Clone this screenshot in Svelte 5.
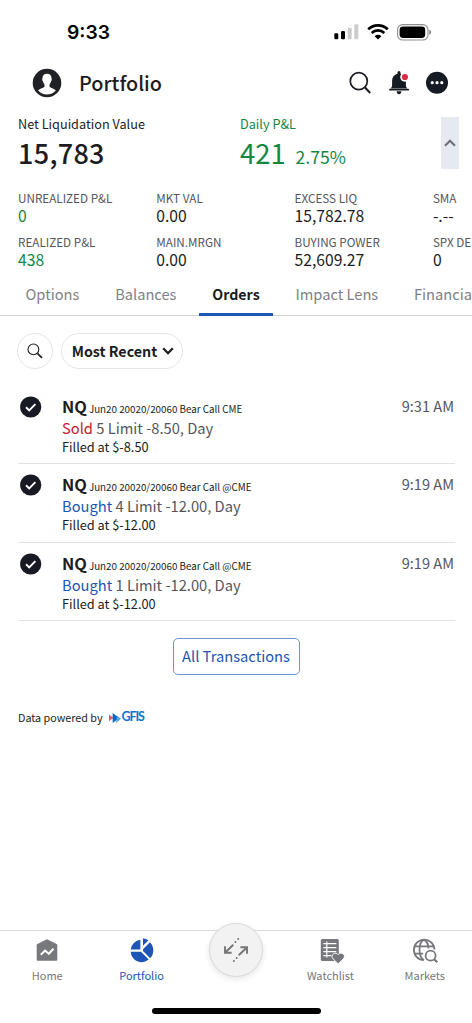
<script>
    let activeTab = "Orders";
    let activeNav = "Portfolio";

    const tabs = ["Options", "Balances", "Orders", "Impact Lens", "Financia"];

    const stats = [
        { label: "UNREALIZED P&L", value: "0", up: true },
        { label: "MKT VAL", value: "0.00" },
        { label: "EXCESS LIQ", value: "15,782.78" },
        { label: "SMA", value: "-.--" },
        { label: "REALIZED P&L", value: "438", up: true },
        { label: "MAIN.MRGN", value: "0.00" },
        { label: "BUYING POWER", value: "52,609.27" },
        { label: "SPX DE", value: "0" }
    ];

    const orders = [
        { name: "Jun20 20020/20060 Bear Call CME", side: "Sold", detail: "5 Limit -8.50, Day", fill: "$-8.50", time: "9:31 AM" },
        { name: "Jun20 20020/20060 Bear Call @CME", side: "Bought", detail: "4 Limit -12.00, Day", fill: "$-12.00", time: "9:19 AM" },
        { name: "Jun20 20020/20060 Bear Call @CME", side: "Bought", detail: "1 Limit -12.00, Day", fill: "$-12.00", time: "9:19 AM" }
    ];
</script>

<div class="screen">
    <div class="status">
        <span class="clock">9:33</span>
        <div class="status-icons">
            <svg width="25" height="16" viewBox="0 0 25 16">
                <rect x="0.3" y="9.3" width="4" height="6" rx="1.2" />
                <rect x="7" y="7" width="4" height="8.3" rx="1.2" />
                <rect x="13.7" y="3.7" width="4" height="11.6" rx="1.2" fill="#ccc" />
                <rect x="20.3" y="0.3" width="4" height="15" rx="1.2" fill="#ccc" />
            </svg>
            <svg width="22" height="16" viewBox="0 0 22 16">
                <path d="M1.2 5.2A14.2 14.2 0 0 1 20.8 5.2M4.7 8.9A9.2 9.2 0 0 1 17.3 8.9" fill="none" stroke="#000" stroke-width="2.7" />
                <path d="M7.6 12.2a5.4 5.4 0 0 1 6.8 0L11 15.6z" />
            </svg>
            <svg width="35" height="17" viewBox="0 0 35 17">
                <rect x="0.6" y="0.6" width="30.4" height="15.4" rx="5" fill="none" stroke="#8e8e8e" stroke-width="1.1" />
                <rect x="2.6" y="2.6" width="25.6" height="11.4" rx="3.4" />
                <path d="M32.2 5.8c2.6.8 2.6 4.2 0 5z" fill="#888" />
            </svg>
        </div>
    </div>

    <header>
        <svg width="30" height="30" viewBox="0 0 30 30">
            <circle cx="15" cy="15" r="14.3" fill="#212226" />
            <path d="M15 5.8c-3 0-4.7 2-4.6 4.9-.5.5-.1 2.2.5 2.6.3 1.4.9 2.4 1.6 3.1v2.1c-.8 1.7-4.7 1.9-6.3 4A11.5 11.5 0 0 0 15 26.6a11.5 11.5 0 0 0 8.8-4.1c-1.6-2.1-5.5-2.3-6.3-4v-2.1c.7-.7 1.3-1.7 1.6-3.1.6-.4 1-2.1.5-2.6.1-2.9-1.6-4.9-4.6-4.9z" fill="#fff" />
        </svg>
        <h1>Portfolio</h1>
        <div class="actions">
            <svg width="24" height="24" viewBox="0 0 24 24" fill="none" stroke="#1b1d22" stroke-width="1.7">
                <circle cx="9.8" cy="10.2" r="8.5" />
                <path d="M15.8 16.3l5.4 5.7" stroke-width="2" />
            </svg>
            <svg width="22" height="24" viewBox="0 0 22 24" fill="#161a22">
                <path d="M9.5 2.7V1.5a1.5 1.5 0 0 1 3 0v1.2c3.5.8 5.4 3.5 5.4 7v4.5c0 1.2.6 2.4 1.5 3.2H2.6c.9-.8 1.5-2 1.5-3.2V9.7c0-3.5 1.9-6.2 5.4-7z" />
                <rect x="1.2" y="17.7" width="19.8" height="1.9" rx=".7" />
                <path d="M8.6 20.2h4.8c-.1 1.8-1.1 3-2.4 3s-2.3-1.2-2.4-3z" />
                <circle cx="16.9" cy="6" r="4.7" fill="#fff" />
                <circle cx="16.9" cy="6" r="3.1" fill="#dc2b45" />
            </svg>
            <svg width="24" height="24" viewBox="0 0 24 24">
                <circle cx="12" cy="11.7" r="11" fill="#161a22" />
                <g fill="#fff">
                    <circle cx="7.2" cy="11.7" r="1.6" />
                    <circle cx="12" cy="11.7" r="1.6" />
                    <circle cx="16.8" cy="11.7" r="1.6" />
                </g>
            </svg>
        </div>
    </header>

    <section class="summary">
        <div class="net">
            <div class="caption">Net Liquidation Value</div>
            <div class="amount">15,783</div>
        </div>
        <div class="daily">
            <div class="caption">Daily P&amp;L</div>
            <div class="amount">421<small>2.75%</small></div>
        </div>
        <button class="collapse" aria-label="Collapse">
            <svg width="12" height="8" viewBox="0 0 12 8" fill="none" stroke="#6c6f78" stroke-width="2.1">
                <path d="M1 6.8l5-5 5 5" />
            </svg>
        </button>
    </section>

    <section class="stats">
        {#each stats as stat}
            <div>
                <div class="label">{stat.label}</div>
                <div class="value" class:up={stat.up}>{stat.value}</div>
            </div>
        {/each}
    </section>

    <nav class="tabs">
        {#each tabs as tab}
            <button class="tab" class:active={tab === activeTab} on:click={() => (activeTab = tab)}>{tab}</button>
        {/each}
    </nav>

    <div class="filters">
        <button class="round" aria-label="Search">
            <svg width="16" height="16" viewBox="0 0 16 16" fill="none" stroke="#1b1d22">
                <circle cx="6.4" cy="6.4" r="5.4" stroke-width="1.1" />
                <path d="M10.4 10.4l4.6 4.5" stroke-width="1.7" />
            </svg>
        </button>
        <button class="pill">
            <span>Most Recent</span>
            <svg width="12" height="8" viewBox="0 0 12 8" fill="none" stroke="#1b1d22" stroke-width="2.3">
                <path d="M1.2 1.2L6 6.2l4.8-5" />
            </svg>
        </button>
    </div>

    <div class="orders">
        {#each orders as order}
            <div class="order">
                <svg class="check" width="22" height="22" viewBox="0 0 22 22">
                    <circle cx="10.7" cy="11" r="10.6" fill="#171a23" />
                    <path d="M6 11.3l3.2 3.1 6.2-6.3" fill="none" stroke="#fff" stroke-width="1.9" />
                </svg>
                <div class="info">
                    <div class="symbol"><b>NQ</b><span>{order.name}</span></div>
                    <div class="detail"><span class={order.side === "Sold" ? "sold" : "bought"}>{order.side}</span> {order.detail}</div>
                    <div class="fill">Filled at {order.fill}</div>
                </div>
                <div class="time">{order.time}</div>
            </div>
        {/each}
    </div>

    <button class="all">All Transactions</button>

    <div class="powered">
        <span>Data powered by</span>
        <svg width="12" height="12" viewBox="0 0 12 12">
            <path d="M0 2.5l4.5 3.3L0 9.2z" fill="#e4606c" />
            <path d="M3.7 1l6.6 5-6.6 5z" fill="#0b66c3" />
            <path d="M8 3.8l4 2.9L7 11z" fill="#48a9e6" />
        </svg>
        <b>GFIS</b>
    </div>

    <footer>
        <div class="nav">
            <div class="item">
                <svg width="24" height="26" viewBox="0 0 24 26">
                    <path d="M12 2.3l9.6 4.8c.5.3.7.6.7 1.2v14.2c0 .8-.5 1.3-1.3 1.3H3c-.8 0-1.3-.5-1.3-1.3V8.3c0-.6.2-.9.7-1.2z" fill="#77787d" />
                    <path d="M5.8 17.8l4.3-4.2 3.7 3.2 4.7-5" fill="none" stroke="#fff" stroke-width="2" />
                </svg>
                <span>Home</span>
            </div>
            <div class="item" class:active={activeNav === "Portfolio"}>
                <svg width="24" height="26" viewBox="0 0 24 26" fill="#1d56b5">
                    <path d="M10.4 2.8v9.8H.7A11 11 0 0 1 10.4 2.8z" />
                    <path d="M13 1.2a11 11 0 0 1 5.4 2.1L13 8.7z" />
                    <path d="M20 5.3a11.5 11.5 0 0 1 .2 15.9L13 14v-1.8z" />
                    <path d="M.7 14.8h10.2l7.8 7.8A11 11 0 0 1 .7 14.8z" />
                </svg>
                <span>Portfolio</span>
            </div>
            <div class="item trade">
                <div class="fab">
                    <svg width="26" height="26" viewBox="0 0 26 26" fill="none" stroke="#747474" stroke-width="1.9">
                        <path d="M10.3 7.8L2.4 15.3M2 9.3v6.4h6.6" />
                        <path d="M15.7 18.2l7.9-7.5M24 16.7v-6.4h-6.6" />
                        <g fill="#747474" stroke="none">
                            <circle cx="12.4" cy="4.9" r="1" />
                            <circle cx="15.2" cy="2" r="1" />
                            <circle cx="13.6" cy="21.1" r="1" />
                            <circle cx="10.9" cy="24" r="1" />
                        </g>
                    </svg>
                </div>
            </div>
            <div class="item">
                <svg width="24" height="26" viewBox="0 0 24 26">
                    <rect x="2.8" y="2" width="18" height="22" rx="1.5" fill="#77787d" />
                    <path d="M5.3 6.6h13M5.3 10.6h13M5.3 14.6h13M5.3 18.6h8M8.8 4.5v16" stroke="#fff" stroke-width="1.2" />
                    <path d="M20.2 26.9l-5.2-5.1c-3.4-4.1 2.5-7.7 5.200-4.200 2.700-3.500 8.600.1 5.200 4.200z" fill="#77787d" stroke="#fff" stroke-width="1" />
                </svg>
                <span>Watchlist</span>
            </div>
            <div class="item">
                <svg width="26" height="26" viewBox="0 0 26 26" fill="none" stroke="#77787d" stroke-width="1.8">
                    <path d="M12 23.2A10.3 10.3 0 1 1 22.5 12.5M12 23.2c-6-3.5-6-17.5 0-20.6 2.9 1.7 4.4 5.3 4.5 9M2.6 9.3h19M2.6 16.7h8.5" />
                    <circle cx="18.6" cy="18.7" r="5" />
                    <path d="M22.2 22.3l3 3" stroke-width="2.2" />
                </svg>
                <span>Markets</span>
            </div>
        </div>
        <div class="indicator"></div>
    </footer>
</div>

<style>
    :global(body) {
        margin: 0;
        background: #fff;
    }

    .screen {
        width: 472px;
        height: 1023px;
        display: flex;
        flex-direction: column;
        overflow: hidden;
        background: #fff;
        color: #1b1d22;
        font-family: "Noto Sans CJK SC", "Noto Sans", sans-serif;
    }

    svg {
        display: block;
        flex: none;
        overflow: visible;
    }

    button {
        margin: 0;
        padding: 0;
        border: none;
        background: none;
        color: inherit;
        font-family: inherit;
    }

    .status {
        height: 62px;
        flex: none;
        box-sizing: border-box;
        padding: 2px 40px 0 67px;
        display: flex;
        align-items: center;
        justify-content: space-between;
    }

    .clock {
        font: 600 19.3px/24px Inter, sans-serif;
        color: #000;
    }

    .status-icons {
        display: flex;
        align-items: center;
        gap: 8px;
    }

    header {
        height: 42px;
        flex: none;
        display: flex;
        align-items: center;
        padding: 0 23px 0 32px;
    }

    h1 {
        flex: 1;
        margin: 0 0 0 17px;
        font-size: 19.8px;
        line-height: 30px;
        font-weight: 500;
    }

    .actions {
        display: flex;
        align-items: center;
        gap: 15px;
    }

    .summary {
        height: 84px;
        flex: none;
        box-sizing: border-box;
        display: flex;
        padding: 10px 13px 0 18px;
    }

    .net {
        width: 222px;
    }

    .daily {
        flex: 1;
        color: #13883f;
    }

    .caption {
        font-size: 12.7px;
        line-height: 19px;
    }

    .amount {
        font-size: 27px;
        line-height: 39px;
        font-weight: 500;
        letter-spacing: 0.3px;
    }

    .daily .amount {
        font-size: 27.4px;
        line-height: 38px;
        font-weight: 400;
        letter-spacing: 0;
    }

    .amount small {
        margin-left: 10px;
        font-size: 17.6px;
    }

    .collapse {
        width: 18px;
        height: 52px;
        margin-top: 3px;
        display: flex;
        align-items: center;
        justify-content: center;
        background: #e5eaf1;
    }

    .stats {
        height: 88px;
        flex: none;
        display: grid;
        grid-template-columns: repeat(4, 138.3px);
        grid-auto-rows: 44px;
        padding-left: 18px;
        white-space: nowrap;
    }

    .label {
        font-size: 11.7px;
        line-height: 19px;
        color: #55565c;
    }

    .value {
        font-size: 15.7px;
        line-height: 18px;
    }

    .up {
        color: #13883f;
    }

    .tabs {
        height: 40px;
        flex: none;
        box-sizing: border-box;
        display: flex;
        gap: 9.8px;
        padding-left: 12.5px;
        border-bottom: 1px solid #d5d6d8;
    }

    .tab {
        flex: none;
        height: 40px;
        box-sizing: border-box;
        padding: 0 13px 5px;
        font-size: 14.65px;
        line-height: 24px;
        color: #808186;
    }

    .tab.active {
        border-bottom: 3px solid #1d56b5;
        border-radius: 2px 2px 0 0;
        padding-bottom: 2px;
        color: #1b1d22;
        font-size: 14.2px;
        font-weight: 700;
    }

    .filters {
        display: flex;
        gap: 8px;
        padding: 17px 0 0 17px;
    }

    .round,
    .pill {
        height: 36px;
        box-sizing: border-box;
        display: flex;
        align-items: center;
        justify-content: center;
        border: 1px solid #e4e5e7;
        border-radius: 18px;
    }

    .round {
        width: 36px;
    }

    .pill {
        width: 122px;
        padding: 0 0 1px 2px;
        gap: 5px;
        font-size: 14.3px;
        font-weight: 700;
    }

    .orders {
        padding: 17px 17px 0 18px;
    }

    .order {
        height: 78.3px;
        box-sizing: border-box;
        display: flex;
        padding-top: 10px;
        border-bottom: 1px solid #e1e2e4;
    }

    .check {
        margin: 0 20px 0 2px;
    }

    .info {
        flex: 1;
        margin-top: -1px;
    }

    .symbol {
        display: flex;
        align-items: baseline;
        gap: 2px;
        height: 22px;
        line-height: 22px;
    }

    .symbol b {
        font-size: 16.4px;
        font-weight: 700;
    }

    .symbol span {
        font-size: 9.8px;
    }

    .detail {
        font-size: 14.7px;
        line-height: 21px;
        color: #55565c;
    }

    .sold {
        color: #c8202f;
    }

    .bought {
        color: #1d56b5;
    }

    .fill {
        font-size: 12.75px;
        line-height: 18px;
    }

    .time {
        margin: -1px 1px 0 0;
        font-size: 14.6px;
        line-height: 22px;
        color: #55565c;
    }

    .all {
        align-self: center;
        width: 127px;
        height: 37px;
        flex: none;
        margin-top: 17px;
        padding-bottom: 2px;
        border: 1px solid #6f95cd;
        border-radius: 5px;
        font-size: 14.7px;
        color: #1d56b5;
    }

    .powered {
        display: flex;
        align-items: center;
        height: 20px;
        margin: 33px 0 0 18px;
        font-size: 10.75px;
        line-height: 20px;
    }

    .powered svg {
        margin: 0 1px 0 6px;
    }

    .powered b {
        margin-top: -1px;
        font: 700 12.5px/20px Lato, sans-serif;
        letter-spacing: -1.1px;
        color: #0b74d1;
    }

    footer {
        height: 93px;
        flex: none;
        box-sizing: border-box;
        margin-top: auto;
        border-top: 1px solid #dcdddf;
    }

    .nav {
        height: 77px;
        display: grid;
        grid-template-columns: repeat(5, 1fr);
    }

    .item {
        display: flex;
        flex-direction: column;
        align-items: center;
        padding-top: 6px;
        font-size: 11px;
        line-height: 16px;
        color: #77787d;
    }

    .item span {
        margin-top: 4px;
    }

    .item.active {
        color: #1d56b5;
    }

    .item.trade {
        padding: 0;
    }

    .fab {
        width: 54px;
        height: 54px;
        box-sizing: border-box;
        margin-top: -8px;
        display: flex;
        align-items: center;
        justify-content: center;
        border: 1px solid #d9d9d9;
        border-radius: 50%;
        background: #f2f2f2;
        box-shadow: 0 2px 6px rgba(0, 0, 0, 0.1);
    }

    .indicator {
        width: 169px;
        height: 6px;
        margin: 0 auto;
        border-radius: 3px;
        background: #000;
    }
</style>
